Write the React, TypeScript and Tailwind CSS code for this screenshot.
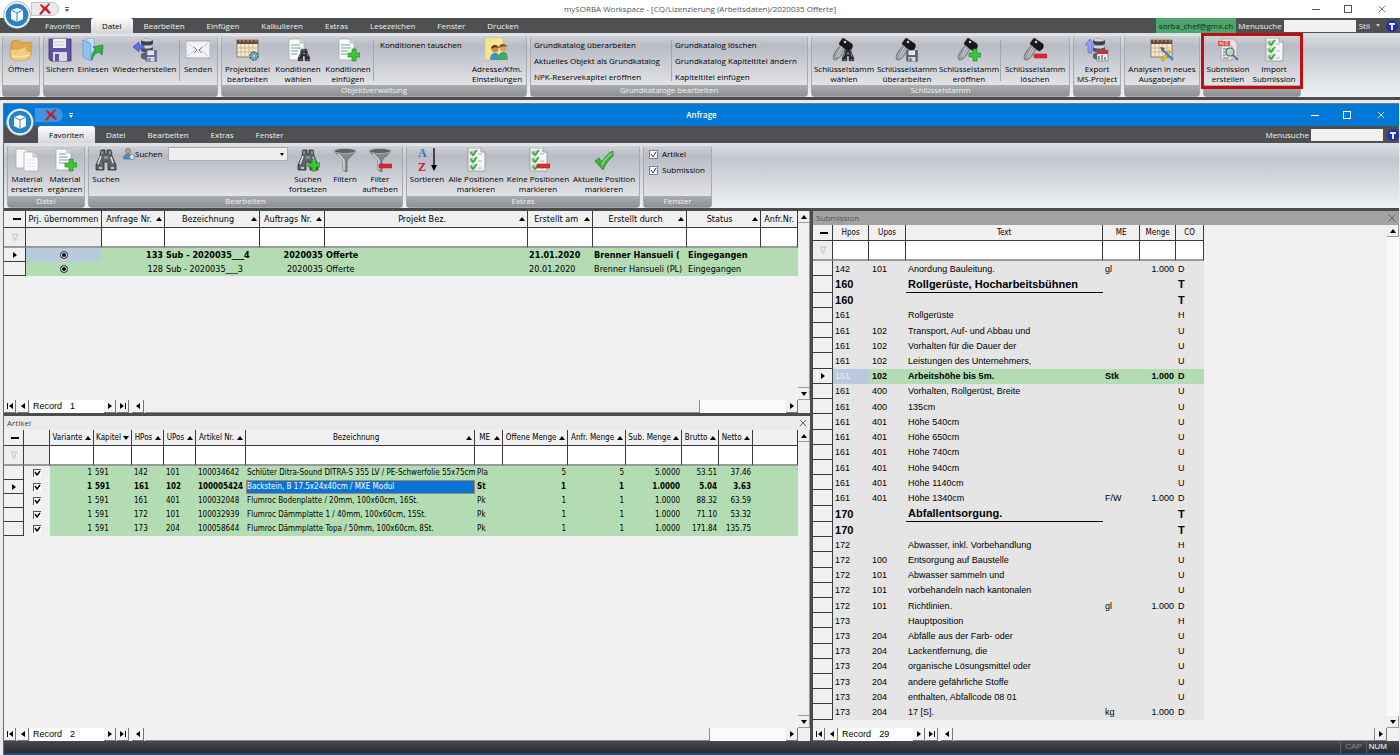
import React from 'react';

type IconProps = { className?: string };

const Svg: React.FC<{ children: React.ReactNode; className?: string }> = ({ children, className }) => (
    <svg viewBox="0 0 24 24" className={className || 'w-6 h-6'} fill="none" aria-hidden="true">
        {children}
    </svg>
);

/* ---------- shared icon parts ---------- */

const PlusPart = () => (
    <path d="M16 11h4v4h4v4h-4v4h-4v-4h-4v-4h4z" fill="#3fc43a" stroke="#1c8a22" strokeWidth="0.7" />
);

const MinusPart = () => <rect x="11" y="16" width="13" height="4" rx="0.5" fill="#e02a30" stroke="#a8141a" strokeWidth="0.5" />;

const DocPart = () => (
    <>
        <path d="M3 1h11l4 4v17H3z" fill="#fafbfb" stroke="#a4a9ae" strokeWidth="0.8" />
        <path d="M14 1v4h4" fill="#dfe3e6" stroke="#a4a9ae" strokeWidth="0.8" />
    </>
);

const BinoPart: React.FC<{ x?: number; y?: number; s?: number; light?: boolean }> = ({ x = 0, y = 0, s = 1, light }) => (
    <g transform={`translate(${x} ${y}) scale(${s})`}>
        <path d="M7 2h4v4h2V2h4l1 6 4 9v5h-8v-8h-4v8H2v-5l4-9z" fill={light ? '#606468' : '#26282b'} stroke="#1b1c1e" strokeWidth="0.7" />
        <path d="M4 16l3-8M19 15l-2-6M5 20h3M17 20h3" stroke={light ? '#dfe2e4' : '#8b9095'} strokeWidth="1.6" />
        <path d="M8 3v3M16 3v3" stroke="#b9bdc1" strokeWidth="1" />
        <rect x="10" y="8" width="4" height="3" fill="#8b8f93" />
    </g>
);

const KeyPart = () => (
    <>
        <path d="M2 22c-2-2 0-8 4-12l5-5 4 3-4 6c-2 4-4 8-9 8z" fill="#989ca0" stroke="#6e7276" strokeWidth="0.8" />
        <path d="M4 19l6-11M6 19l5-8" stroke="#d5d8da" strokeWidth="0.9" />
        <path d="M8 4l3-4 9 6c1 2 0 5-2 6l-2 1-9-7z" fill="#17181a" stroke="#000" strokeWidth="0.5" />
        <circle cx="13" cy="4" r="1.3" fill="#c8cbce" />
    </>
);

const CheckListPart = () => (
    <>
        <path d="M4 0h13l4 4v19H4z" fill="#f4f6f5" stroke="#8e9499" strokeWidth="0.8" />
        <path d="M17 0v4h4" fill="#cfd4d6" stroke="#8e9499" strokeWidth="0.8" />
        <path d="M6 3h5v4H6zM6 10h5v4H6zM6 17h5v4H6z" fill="#e2ebe0" stroke="#8c9b8c" strokeWidth="0.6" />
        <path d="M7 4l2 3 4-5M7 11l2 3 4-5M7 18l2 3 4-5" stroke="#36a936" strokeWidth="1.7" />
        <path d="M14 6h4M14 13h4M14 20h4" stroke="#9ba3a5" strokeWidth="0.8" />
    </>
);

const CalendarPart = () => (
    <>
        <rect x="1" y="2" width="21" height="17" fill="#f5ead3" stroke="#7b6550" strokeWidth="0.8" />
        <rect x="1" y="2" width="21" height="4" fill="#6a4a35" />
        <path d="M4 0v4M8 0v4M12 0v4M16 0v4M20 0v4" stroke="#c9b49a" strokeWidth="0.9" />
        <path d="M1 10h21M1 14h21M5 6v13M9 6v13M13 6v13M17 6v13" stroke="#c9a97c" strokeWidth="0.8" />
    </>
);

const DiskPart: React.FC<{ x: number; y: number; s: number; color: string }> = ({ x, y, s, color }) => (
    <g transform={`translate(${x} ${y}) scale(${s})`}>
        <path d="M1 1h22v22H3l-2-2z" fill={color} stroke="#3d3467" strokeWidth="0.8" />
        <rect x="5" y="1" width="13" height="9" fill="#f1f1f6" />
        <path d="M6 4h11M6 7h11" stroke="#bcbccc" strokeWidth="0.8" />
        <rect x="5" y="14" width="14" height="9" fill="#d9d9e6" />
        <rect x="7" y="16" width="4" height="7" fill={color} />
    </g>
);

const ServerPart = () => (
    <>
        <path d="M8 2c3-2 9-2 12 0v4c-3 2-9 2-12 0z" fill="#3e4348" />
        <path d="M8 9c3-2 9-2 12 0v4c-3 2-9 2-12 0z" fill="#4c5257" />
        <path d="M8 16c3-2 9-2 12 0v4c-3 2-9 2-12 0z" fill="#5b6166" />
        <path d="M8 2c3-2 9-2 12 0-3 2-9 2-12 0zM8 9c3-2 9-2 12 0-3 2-9 2-12 0z" fill="#cfd5da" />
    </>
);

/* ---------- icons ---------- */

const FolderIcon = () => (
    <Svg>
        <path d="M2 8l1-5 7-1 2 3 10-1v12l-3 5H2z" fill="#e2ab4a" stroke="#b98329" strokeWidth="0.6" />
        <path d="M1 11c5 1 12 0 16-3l1 5 5 1-3 7c-6 2-13 2-18 0z" fill="#f3cb7c" stroke="#c89239" strokeWidth="0.6" />
        <path d="M3 18c6 1 11 1 17-1" stroke="#fbe5b2" strokeWidth="1.4" />
    </Svg>
);

const SaveIcon = () => (
    <Svg>
        <DiskPart x={0} y={0} s={1} color="#6552a3" />
    </Svg>
);

const ImportIcon = () => (
    <Svg>
        <path d="M2 2l8 4v17l-8-4z" fill="#8ec3ee" stroke="#5590c8" strokeWidth="0.6" />
        <path d="M4 1l9-1v15l-3 8V6z" fill="#c5e2f8" stroke="#6aa3d6" strokeWidth="0.6" />
        <path d="M11 22c-1-6 1-9 4-10l-3-3 10-2-1 10-3-3c-4 1-6 4-7 8z" fill="#2fb344" stroke="#157a2a" strokeWidth="0.7" />
    </Svg>
);

const RestoreIcon = () => (
    <Svg>
        <ServerPart />
        <path d="M0 9l6-5v3h5v4H6v3z" fill="#5f6fe8" stroke="#2f3dae" strokeWidth="0.6" />
        <DiskPart x={12} y={12} s={0.5} color="#6b6f92" />
    </Svg>
);

const MailIcon = () => (
    <Svg>
        <rect x="0" y="3" width="24" height="17" fill="#f3f4f5" stroke="#a2a7ac" strokeWidth="1" />
        <path d="M2 5l10 8 10-8M2 18l8-7M22 18l-8-7" stroke="#c9cdd0" strokeWidth="1" />
        <path d="M8 9l3 3-3 3M16 9l-3 3 3 3" stroke="#7f858a" strokeWidth="1" />
    </Svg>
);

const ProjectIcon = () => (
    <Svg>
        <CalendarPart />
        <circle cx="18" cy="18" r="4" fill="#7fb3c4" stroke="#2f6377" strokeWidth="1.4" strokeDasharray="2 1" />
        <circle cx="18" cy="18" r="1.6" fill="#e9f1f4" stroke="#2f6377" strokeWidth="0.6" />
    </Svg>
);

const DocLines = () => <path d="M5 7h9M5 10h10M5 13h7M5 16h6" stroke="#69ae85" strokeWidth="1.2" />;

const DocSearchIcon = () => (
    <Svg>
        <DocPart />
        <DocLines />
        <BinoPart x={11} y={10} s={0.58} />
    </Svg>
);

const DocPlusIcon = () => (
    <Svg>
        <DocPart />
        <DocLines />
        <PlusPart />
    </Svg>
);

const ContactsIcon = () => (
    <Svg>
        <rect x="0" y="0" width="18" height="22" fill="#f6e58d" stroke="#d8c25a" strokeWidth="0.5" />
        <circle cx="10" cy="11" r="3.4" fill="#c98a55" />
        <path d="M6 11c0-5 7-5 8-1-2-1-5-1-8 1z" fill="#55341c" />
        <circle cx="18" cy="10" r="3.4" fill="#dba06a" />
        <path d="M14 10c0-5 7-5 8-1-2-1-5-1-8 1z" fill="#7a4a22" />
        <path d="M5 22c0-5 2-7 5-7s5 2 5 7z" fill="#3f8fc9" />
        <path d="M13 22c0-6 2-8 5-8s5 2 5 8z" fill="#3daa6e" />
    </Svg>
);

const KeySearchIcon = () => (
    <Svg>
        <KeyPart />
        <BinoPart x={9} y={10} s={0.58} />
    </Svg>
);

const KeyEditIcon = () => (
    <Svg>
        <KeyPart />
        <DiskPart x={11} y={12} s={0.5} color="#5d6370" />
    </Svg>
);

const KeyPlusIcon = () => (
    <Svg>
        <KeyPart />
        <PlusPart />
    </Svg>
);

const KeyMinusIcon = () => (
    <Svg>
        <KeyPart />
        <MinusPart />
    </Svg>
);

const ExportIcon = () => (
    <Svg>
        <ServerPart />
        <path d="M5 1l5 6H7v8H3V7H0z" fill="#8f9bf0" stroke="#5562c9" strokeWidth="0.6" />
        <rect x="12" y="12" width="11" height="11" fill="#eceef0" stroke="#70757a" strokeWidth="0.7" />
        <rect x="12" y="12" width="11" height="4" fill="#c9343b" />
        <path d="M14 18v4M17 17v5M20 19v3" stroke="#555b60" strokeWidth="1.2" />
    </Svg>
);

const AnalysisIcon = () => (
    <Svg>
        <CalendarPart />
        <path d="M11 22l8-10 2 2-8 9z" fill="#f0c63c" stroke="#9d7b12" strokeWidth="0.6" />
        <path d="M13 12l10 10" stroke="#4f7fc9" strokeWidth="2.4" />
        <path d="M10 9l5 1-3 4z" fill="#5e6469" />
    </Svg>
);

const SubmissionIcon = () => (
    <Svg>
        <path d="M6 1h11l4 4v16H6z" fill="#f3dfdd" stroke="#b8a3a2" strokeWidth="0.8" />
        <path d="M2 3h12v5H2z" fill="#d9534c" />
        <path d="M3 6l2-2v3M7 4v3M9 4h3M9 6h3" stroke="#fbe3e0" strokeWidth="0.8" />
        <path d="M5 8h11v14H5z" fill="#e9ebea" stroke="#8f9599" strokeWidth="0.7" />
        <path d="M7 11h6M7 14h3M7 17h3M7 20h6" stroke="#70777c" strokeWidth="1" />
        <circle cx="14" cy="14" r="4" fill="#b5d8c8" stroke="#54615c" strokeWidth="1.2" />
        <path d="M17 17l5 5" stroke="#4b78b8" strokeWidth="2.2" />
    </Svg>
);

const CheckListIcon = () => (
    <Svg>
        <CheckListPart />
    </Svg>
);

const CheckListMinusIcon = () => (
    <Svg>
        <CheckListPart />
        <MinusPart />
    </Svg>
);

const CopyIcon = () => (
    <Svg>
        <path d="M1 1h9l4 4v15H1z" fill="#f7f8f8" stroke="#a9adb1" strokeWidth="0.8" />
        <path d="M9 4h9l5 5v14H9z" fill="#fcfcfc" stroke="#a9adb1" strokeWidth="0.8" />
        <path d="M18 4v5h5" fill="#e1e4e6" stroke="#a9adb1" strokeWidth="0.8" />
        <path d="M11 12h9M11 15h9M11 18h9" stroke="#dcdfe1" strokeWidth="0.9" />
    </Svg>
);

const AddDocIcon = () => (
    <Svg>
        <DocPart />
        <path d="M6 6h7M6 9h9M6 12h9M6 15h6" stroke="#8b95a5" strokeWidth="1" />
        <PlusPart />
    </Svg>
);

const SearchIcon = () => (
    <Svg>
        <BinoPart light />
    </Svg>
);

const SearchNextIcon = () => (
    <Svg>
        <BinoPart light />
        <PlusPart />
    </Svg>
);

const FunnelPart = () => (
    <>
        <path d="M1 3c3 4 8 7 9 10v9l4 2V13c1-3 6-6 9-10z" fill="#85898d" stroke="#585c60" strokeWidth="0.7" />
        <path d="M5 6c3 3 6 5 6 8v8" stroke="#d8dbdd" strokeWidth="1.6" />
        <ellipse cx="12" cy="3" rx="11" ry="2.5" fill="#5d6165" stroke="#b7babd" strokeWidth="0.8" />
    </>
);

const FilterIcon = () => (
    <Svg>
        <FunnelPart />
    </Svg>
);

const FilterOffIcon = () => (
    <Svg>
        <FunnelPart />
        <MinusPart />
    </Svg>
);

const SortIcon = () => (
    <Svg className="w-6 h-6 overflow-visible">
        <text x="3" y="9" fontFamily="Liberation Serif, serif" fontWeight="700" fontSize="12" fill="#3f6fc4">A</text>
        <text x="3" y="23" fontFamily="Liberation Serif, serif" fontWeight="700" fontSize="12" fill="#c8202c">Z</text>
        <path d="M19 0v20" stroke="#000" strokeWidth="1.3" />
        <path d="M16 17h6l-3 6z" fill="#000" />
    </Svg>
);

const BigCheckIcon = () => (
    <Svg>
        <path d="M3 13l4-3 3 4c3-5 6-9 11-11v5c-5 4-8 9-10 14z" fill="#3fb43c" stroke="#1b7a22" strokeWidth="0.7" />
        <path d="M10 17c2-5 6-9 10-12" stroke="#93e08a" strokeWidth="1.2" />
    </Svg>
);

const UserIcon = () => (
    <Svg className="w-3 h-3">
        <circle cx="10" cy="6" r="5" fill="#c9a27a" stroke="#6e5235" />
        <path d="M1 22c0-7 4-10 9-10s8 3 9 10z" fill="#4f87c7" stroke="#2f5f98" />
        <circle cx="18" cy="18" r="5" fill="#dbe6ee" stroke="#6c7b86" strokeWidth="1.5" />
    </Svg>
);

const LogoIcon: React.FC<IconProps> = ({ className }) => (
    <svg viewBox="0 0 28 28" className={className} aria-hidden="true">
        <circle cx="14" cy="14" r="13.5" fill="#f2f4f6" stroke="#8a9097" strokeWidth="0.6" />
        <circle cx="14" cy="14" r="11.3" fill="#2683c6" />
        <path d="M14 7l6 2v9l-6 3-6-3V9z" fill="#fff" />
        <path d="M8 9l6 3 6-3M14 12v9" stroke="#2683c6" strokeWidth="1" fill="none" />
    </svg>
);

const InfoIcon = () => (
    <svg viewBox="0 0 12 12" className="w-3 h-3" aria-hidden="true">
        <circle cx="6" cy="6" r="5.8" fill="#1c2fb5" />
        <path d="M3 3h6v2H7v5H5V5H3z" fill="#e8ecff" />
    </svg>
);

const CrossIcon: React.FC<IconProps> = ({ className }) => (
    <svg viewBox="0 0 10 10" className={className} fill="none" stroke="currentColor" aria-hidden="true">
        <path d="M1 1l8 8M9 1l-8 8" />
    </svg>
);

const RedCrossIcon = () => (
    <svg viewBox="0 0 12 12" className="w-3 h-3" aria-hidden="true">
        <path d="M2 1l4 3 4-4 1 1-3 4 4 5-2 1-4-4-4 5-2-1 4-5-3-4z" fill="#c81e2a" />
    </svg>
);

const Arrow: React.FC<{ dir: 'up' | 'down' | 'left' | 'right' | 'first' | 'last' }> = ({ dir }) => (
    <svg viewBox="0 0 8 8" className="w-2 h-2 shrink-0" fill="#000" aria-hidden="true">
        {dir === 'up' && <path d="M1 6l3-4 3 4z" />}
        {dir === 'down' && <path d="M1 2h6L4 6z" />}
        {dir === 'left' && <path d="M6 1v6L2 4z" />}
        {dir === 'right' && <path d="M2 1v6l4-3z" />}
        {dir === 'first' && <path d="M1 1h1v6H1zM7 1v6L3 4z" />}
        {dir === 'last' && <path d="M6 1h1v6H6zM1 1v6l4-3z" />}
    </svg>
);

/* ---------- window chrome ---------- */

const WindowButtons = () => (
    <div className="flex items-center justify-end">
        <button type="button" aria-label="Minimieren" className="w-8 h-4 flex items-center justify-center">
            <span className="w-2 h-px bg-current" />
        </button>
        <button type="button" aria-label="Wiederherstellen" className="w-8 h-4 flex items-center justify-center">
            <span className="w-2 h-2 border border-current" />
        </button>
        <button type="button" aria-label="Schliessen" className="w-9 h-4 flex items-center justify-center">
            <CrossIcon className="w-2 h-2" />
        </button>
    </div>
);

const Tabs: React.FC<{ items: string[]; active: string }> = ({ items, active }) => (
    <nav className="flex h-full items-end">
        {items.map((item) => (
            <button
                key={item}
                type="button"
                className={
                    item === active
                        ? 'h-full px-[11px] rounded-t-[3px] bg-linear-to-b from-white to-[#d3d5d9] text-black'
                        : 'h-full px-[11px] text-[#f2f2f2]'
                }
            >
                {item}
            </button>
        ))}
    </nav>
);

const QuickAccess: React.FC<{ blue?: boolean }> = ({ blue }) => (
    <div className="flex items-center pl-[31px]">
        <button
            type="button"
            aria-label="Abbrechen"
            className={
                blue
                    ? 'w-7 h-3.5 pl-1 flex items-center justify-center rounded-r-full bg-[#3f93e0]'
                    : 'w-7 h-3.5 flex items-center justify-center rounded-r-full border border-[#c3c6ca] bg-[#e9eaec]'
            }
        >
            <RedCrossIcon />
        </button>
        <span className="ml-1.5 flex flex-col items-center gap-px">
            <span className="w-1 h-px bg-current" />
            <svg viewBox="0 0 4 3" className="w-1 h-[3px]" fill="currentColor" aria-hidden="true"><path d="M0 0h4L2 3z" /></svg>
        </span>
    </div>
);

/* ---------- ribbon ---------- */

const Ribbon: React.FC<{ children: React.ReactNode; className: string }> = ({ children, className }) => (
    <div className={`flex gap-[3px] pt-0.5 border-b-[3px] border-[#4b4c4e] bg-linear-to-b from-[#dfe1e5] via-[#c3c6ce] via-25% to-[#eff2f3] ${className}`}>
        {children}
    </div>
);

const Group: React.FC<{ label?: string; className: string; children: React.ReactNode }> = ({ label, className, children }) => (
    <section className={`relative flex flex-col shrink-0 rounded-sm border border-[#a6a9ae] border-t-[#e6e7ea] ${className}`}>
        <div className="flex-1 flex min-h-0 bg-linear-to-b from-[#cfd1d7] via-[#b8bbc5] via-20% to-[#e1e3e5]">{children}</div>
        <div className="h-[11px] leading-[10px] text-center text-[#f0f0f0] bg-linear-to-b from-[#aaacaf] to-[#8e9194]">{label}</div>
    </section>
);

const Tool: React.FC<{ icon: React.ReactNode; label: string; className: string }> = ({ icon, label, className }) => (
    <button type="button" className={`flex flex-col items-center shrink-0 pt-0.5 ${className}`}>
        {icon}
        <span className="mt-0.5 leading-[10px] whitespace-pre text-center">{label}</span>
    </button>
);

const Separator = () => <span className="w-px my-1 bg-[#a3a6ad] shrink-0" />;

const LinkColumn: React.FC<{ items: string[]; className?: string }> = ({ items, className }) => (
    <div className={`flex flex-col items-start pl-[3px] pt-px ${className}`}>
        {items.map((item) => (
            <button key={item} type="button" className="h-4 whitespace-nowrap">{item}</button>
        ))}
    </div>
);

const RibbonCheck: React.FC<{ label: string }> = ({ label }) => (
    <label className="h-4 flex items-center gap-1">
        <span className="relative w-[9px] h-[9px]">
            <input type="checkbox" defaultChecked className="block appearance-none w-[9px] h-[9px] border border-[#7d8288] bg-white" />
            <svg viewBox="0 0 9 9" className="absolute inset-0 pointer-events-none" fill="none" aria-hidden="true">
                <path d="M2 4l2 3 3-5" stroke="#333a5e" />
            </svg>
        </span>
        {label}
    </label>
);

/* ---------- grids ---------- */

type Column = { label: string; width?: number; sort?: 'up' | 'down'; filter?: boolean };

const GridHead: React.FC<{ columns: Column[]; name: string; className: string }> = ({ columns, name, className }) => (
    <>
        <colgroup>
            {columns.map((c, i) => (
                <col key={i} style={c.width ? { width: c.width } : undefined} />
            ))}
        </colgroup>
        <thead>
            <tr className={className}>
                {columns.map((c, i) => (
                    <th key={i} className="p-0 font-normal border-r border-b border-[#3a3a3a] bg-[#f0f0f0]">
                        {i === 0 ? (
                            <span className="block ml-auto mr-1 w-2 h-0.5 bg-black" />
                        ) : (
                            <span className="flex items-center px-px whitespace-nowrap">
                                <span className="flex-1 text-center">{c.label}</span>
                                {c.sort && <Arrow dir={c.sort} />}
                            </span>
                        )}
                    </th>
                ))}
            </tr>
            <tr className="h-5">
                {columns.map((c, i) => (
                    <td
                        key={i}
                        className={
                            c.filter === false || i === 0
                                ? 'p-0 border-r border-b-2 border-r-[#3a3a3a] border-b-[#9a9a9a] bg-[#eeeeee]'
                                : 'p-0 border-r border-b-2 border-r-[#3a3a3a] border-b-[#9a9a9a] bg-white'
                        }
                    >
                        {i === 0 && (
                            <svg viewBox="0 0 8 8" className="w-2 h-2 mx-auto" fill="none" stroke="#c2c2c2" aria-hidden="true">
                                <path d="M1 1h6L5 4v3H3V4z" />
                            </svg>
                        )}
                        {i > 0 && c.filter !== false && (
                            <input aria-label={`${name} Filter ${c.label}`} className="block w-full h-4 px-px bg-transparent outline-none" />
                        )}
                    </td>
                ))}
            </tr>
        </thead>
    </>
);

const RowHead: React.FC<{ current?: boolean }> = ({ current }) => (
    <td className="p-0 border-r border-b border-[#3a3a3a] bg-[#f0f0f0]">
        {current && <span className="flex justify-center"><Arrow dir="right" /></span>}
    </td>
);

const navButton = 'w-3 flex items-center justify-center border-r border-b border-[#777] bg-[#f4f4f4] mr-px';

const RecordBar: React.FC<{ record: number; track?: string }> = ({ record, track }) => (
    <div className="h-[13px] flex shrink-0 font-['Liberation_Sans',sans-serif] text-[9px] bg-[#f0f0f0]">
        <button type="button" aria-label="Erster" className={navButton}><Arrow dir="first" /></button>
        <button type="button" aria-label="Vorheriger" className={navButton}><Arrow dir="left" /></button>
        <span className="w-[74px] pl-[3px] leading-[13px] bg-white">
            Record<span className="ml-2">{record}</span>
        </span>
        <button type="button" aria-label="Nächster" className={navButton}><Arrow dir="right" /></button>
        <button type="button" aria-label="Letzter" className={navButton}><Arrow dir="last" /></button>
        <button type="button" aria-label="Nach links" className={`${navButton} ml-0.5`}><Arrow dir="left" /></button>
        <span className="flex-1 border-r border-b border-[#8a8a8a]" />
        <span className={`bg-[#fafafa] ${track || 'w-0'}`} />
        <button type="button" aria-label="Nach rechts" className="w-3 flex items-center justify-center border-r border-b border-[#777]"><Arrow dir="right" /></button>
        <span className="w-3" />
    </div>
);

const ScrollBar: React.FC<{ thumb?: boolean }> = ({ thumb }) => (
    <div className="w-3 shrink-0 flex flex-col bg-[#fafafa]">
        <button type="button" aria-label="Nach oben" className="h-3 flex items-center justify-center border-r border-b border-[#999] bg-[#f0f0f0]"><Arrow dir="up" /></button>
        <span className={thumb ? 'flex-1 bg-[#f0f0f0] border-r border-b border-[#999]' : 'flex-1'} />
        <button type="button" aria-label="Nach unten" className="h-3 flex items-center justify-center border-r border-b border-[#999] bg-[#f0f0f0]"><Arrow dir="down" /></button>
    </div>
);

/* ---------- data ---------- */

const requestColumns: Column[] = [
    { label: '', width: 22 },
    { label: 'Prj. übernommen', width: 76, filter: false },
    { label: 'Anfrage Nr.', width: 63, sort: 'up' },
    { label: 'Bezeichnung', width: 95, sort: 'up' },
    { label: 'Auftrags Nr.', width: 65, sort: 'up' },
    { label: 'Projekt Bez.', sort: 'up' },
    { label: 'Erstellt am', width: 65, sort: 'up' },
    { label: 'Erstellt durch', width: 94, sort: 'up' },
    { label: 'Status', width: 74, sort: 'up' },
    { label: 'Anfr.Nr.', width: 37 },
];

const requests = [
    { nr: 133, name: 'Sub - 2020035___4', order: '2020035', project: 'Offerte', date: '21.01.2020', by: 'Brenner Hansueli (', status: 'Eingegangen' },
    { nr: 128, name: 'Sub - 2020035___3', order: '2020035', project: 'Offerte', date: '20.01.2020', by: 'Brenner Hansueli (PL)', status: 'Eingegangen' },
];

const articleColumns: Column[] = [
    { label: '', width: 20 },
    { label: '', width: 26, filter: false },
    { label: 'Variante', width: 44, sort: 'up' },
    { label: 'Kapitel', width: 38, sort: 'down' },
    { label: 'HPos', width: 32, sort: 'up' },
    { label: 'UPos', width: 32, sort: 'up' },
    { label: 'Artikel Nr.', width: 50, sort: 'up' },
    { label: 'Bezeichnung', sort: 'up' },
    { label: 'ME', width: 28, sort: 'up' },
    { label: 'Offene Menge', width: 65, sort: 'up' },
    { label: 'Anfr. Menge', width: 58, sort: 'up' },
    { label: 'Sub. Menge', width: 56, sort: 'up' },
    { label: 'Brutto', width: 37, sort: 'up' },
    { label: 'Netto', width: 34, sort: 'up' },
    { label: '', width: 45 },
];

// hpos, upos, article nr, description, unit, open, requested, sub, gross, net
const articles = [
    ['142', '101', '100034642', 'Schlüter Ditra-Sound DITRA-S 355 LV / PE-Schwerfolie 55x75cm', 'Pla', '5', '5', '5.0000', '53.51', '37.46'],
    ['161', '102', '100005424', 'Backstein, B 17.5x24x40cm / MXE Modul', 'St', '1', '1', '1.0000', '5.04', '3.63'],
    ['161', '401', '100032048', 'Flumroc Bodenplatte / 20mm, 100x60cm, 16St.', 'Pk', '1', '1', '1.0000', '88.32', '63.59'],
    ['172', '101', '100032939', 'Flumroc Dämmplatte 1 / 40mm, 100x60cm, 15St.', 'Pk', '1', '1', '1.0000', '71.10', '53.32'],
    ['173', '204', '100058644', 'Flumroc Dämmplatte Topa / 50mm, 100x60cm, 8St.', 'Pk', '1', '1', '1.0000', '171.84', '135.75'],
];

const submissionColumns: Column[] = [
    { label: '', width: 20 },
    { label: 'Hpos', width: 36 },
    { label: 'Upos', width: 37 },
    { label: 'Text', width: 197 },
    { label: 'ME', width: 37 },
    { label: 'Menge', width: 36 },
    { label: 'CO', width: 28 },
];

// hpos, upos, text, unit, amount, code
const submission = [
    ['142', '101', 'Anordung Bauleitung.', 'gl', '1.000', 'D'],
    ['160', '', 'Rollgerüste, Hocharbeitsbühnen', '', '', 'T'],
    ['160', '', '', '', '', 'T'],
    ['161', '', 'Rollgerüste', '', '', 'H'],
    ['161', '102', 'Transport, Auf- und Abbau und', '', '', 'U'],
    ['161', '102', 'Vorhalten für die Dauer der', '', '', 'U'],
    ['161', '102', 'Leistungen des Unternehmers,', '', '', 'U'],
    ['161', '102', 'Arbeitshöhe bis 5m.', 'Stk', '1.000', 'D'],
    ['161', '400', 'Vorhalten, Rollgerüst, Breite', '', '', 'U'],
    ['161', '400', '135cm', '', '', 'U'],
    ['161', '401', 'Höhe 540cm', '', '', 'U'],
    ['161', '401', 'Höhe 650cm', '', '', 'U'],
    ['161', '401', 'Höhe 740cm', '', '', 'U'],
    ['161', '401', 'Höhe 940cm', '', '', 'U'],
    ['161', '401', 'Höhe 1140cm', '', '', 'U'],
    ['161', '401', 'Höhe 1340cm', 'F/W', '1.000', 'D'],
    ['170', '', 'Abfallentsorgung.', '', '', 'T'],
    ['170', '', '', '', '', 'T'],
    ['172', '', 'Abwasser, inkl. Vorbehandlung', '', '', 'H'],
    ['172', '100', 'Entsorgung auf Baustelle', '', '', 'U'],
    ['172', '101', 'Abwasser sammeln und', '', '', 'U'],
    ['172', '101', 'vorbehandeln nach kantonalen', '', '', 'U'],
    ['172', '101', 'Richtlinien.', 'gl', '1.000', 'D'],
    ['173', '', 'Hauptposition', '', '', 'H'],
    ['173', '204', 'Abfälle aus der Farb- oder', '', '', 'U'],
    ['173', '204', 'Lackentfernung, die', '', '', 'U'],
    ['173', '204', 'organische Lösungsmittel oder', '', '', 'U'],
    ['173', '204', 'andere gefährliche Stoffe', '', '', 'U'],
    ['173', '204', 'enthalten, Abfallcode 08 01', '', '', 'U'],
    ['173', '204', '17 [S].', 'kg', '1.000', 'D'],
];

/* ---------- panes ---------- */

const RequestGrid = () => (
    <section className="h-[205px] shrink-0 flex flex-col border-b-[3px] border-[#4b4c4e]">
        <div className="flex-1 flex min-h-0">
            <div className="flex-1 min-w-0">
                <table className="w-full table-fixed border-separate border-spacing-0 font-['DejaVu_Sans_Condensed','DejaVu_Sans',sans-serif] text-[9px] leading-[13px]">
                    <GridHead columns={requestColumns} name="Anfrage" className="h-[17px]" />
                    <tbody>
                        {requests.map((r, i) => (
                            <tr key={r.nr} className={i === 0 ? 'h-3.5 bg-[#b3dcb3] font-bold whitespace-nowrap' : 'h-3.5 bg-[#b3dcb3] whitespace-nowrap'}>
                                <RowHead current={i === 0} />
                                <td className={i === 0 ? 'p-0 bg-[#b9c9de]' : 'p-0'}>
                                    <input
                                        type="radio"
                                        name={`taken-${r.nr}`}
                                        aria-label={`Projekt übernommen ${r.nr}`}
                                        defaultChecked
                                        className="block mx-auto appearance-none w-2 h-2 rounded-full border border-[#444] bg-black ring-1 ring-inset ring-white"
                                    />
                                </td>
                                <td className="p-0 pr-0.5 text-right">{r.nr}</td>
                                <td className="p-0 pl-px">{r.name}</td>
                                <td className="p-0 pr-0.5 text-right">{r.order}</td>
                                <td className="p-0 pl-px">{r.project}</td>
                                <td className="p-0 pl-px">{r.date}</td>
                                <td className="p-0 pl-px">{r.by}</td>
                                <td className="p-0 pl-px">{r.status}</td>
                                <td className="p-0" />
                            </tr>
                        ))}
                    </tbody>
                </table>
            </div>
            <ScrollBar thumb />
        </div>
        <RecordBar record={1} track="w-[86px]" />
    </section>
);

const ArticleGrid = () => (
    <section className="flex-1 min-h-0 flex flex-col">
        <header className="h-3.5 shrink-0 flex items-center justify-between px-[3px] bg-[#ebebed] text-[8px] text-[#444]">
            <h2>Artikel</h2>
            <button type="button" aria-label="Artikel schliessen"><CrossIcon className="w-2 h-2" /></button>
        </header>
        <div className="flex-1 flex min-h-0">
            <div className="flex-1 min-w-0">
                <table className="w-full table-fixed border-separate border-spacing-0 font-['DejaVu_Sans_Condensed','DejaVu_Sans',sans-serif] text-[8px] leading-[12px]">
                    <GridHead columns={articleColumns} name="Artikel" className="h-4" />
                    <tbody>
                        {articles.map((a, i) => (
                            <tr key={a[2]} className={i === 1 ? 'h-3.5 bg-[#b3dcb3] font-bold whitespace-nowrap' : 'h-3.5 bg-[#b3dcb3] whitespace-nowrap'}>
                                <RowHead current={i === 1} />
                                <td className="p-0 bg-[#f0f0f0]">
                                    <span className="relative block w-2 h-2 mx-auto">
                                        <input
                                            type="checkbox"
                                            aria-label={`Artikel ${a[2]}`}
                                            defaultChecked
                                            className="block appearance-none w-2 h-2 border-t border-l border-[#555] bg-white"
                                        />
                                        <svg viewBox="0 0 8 8" className="absolute inset-0 pointer-events-none" fill="none" aria-hidden="true">
                                            <path d="M2 3l2 3 3-4" stroke="#000" strokeWidth="1.4" />
                                        </svg>
                                    </span>
                                </td>
                                <td className="p-0 pr-0.5 text-right">1</td>
                                <td className="p-0 pl-px">591</td>
                                <td className="p-0 pl-0.5">{a[0]}</td>
                                <td className="p-0 pl-0.5">{a[1]}</td>
                                <td className="p-0 pl-0.5">{a[2]}</td>
                                <td
                                    className={
                                        i === 1
                                            ? 'p-0 font-normal text-white bg-[#0a74d6] border border-[#a08a6a]'
                                            : 'p-0 pl-px'
                                    }
                                >
                                    {a[3]}
                                </td>
                                <td className="p-0 pl-0.5">{a[4]}</td>
                                <td className="p-0 pr-0.5 text-right">{a[5]}</td>
                                <td className="p-0 pr-0.5 text-right">{a[6]}</td>
                                <td className="p-0 pr-0.5 text-right">{a[7]}</td>
                                <td className="p-0 pr-0.5 text-right">{a[8]}</td>
                                <td className="p-0 pr-0.5 text-right">{a[9]}</td>
                                <td className="p-0" />
                            </tr>
                        ))}
                    </tbody>
                </table>
            </div>
            <ScrollBar thumb />
        </div>
        <RecordBar record={2} track="w-[76px]" />
    </section>
);

const rowStyle = (code: string, current: boolean) => {
    if (current) return 'bg-[#b3dcb3] font-bold';
    if (code === 'T') return 'font-bold text-[11px]';
    return '';
};

const SubmissionGrid = () => (
    <aside className="w-[42%] flex flex-col min-h-0">
        <header className="h-3.5 shrink-0 flex items-center justify-between px-[3px] bg-[#a2a2a2] text-[8px] text-[#555]">
            <h2>Submission</h2>
            <button type="button" aria-label="Submission schliessen"><CrossIcon className="w-2 h-2" /></button>
        </header>
        <div className="flex-1 flex min-h-0">
            <div className="flex-1 min-w-0 pb-2">
                <table className="w-[391px] h-full table-fixed border-separate border-spacing-0 font-['Liberation_Sans',sans-serif] text-[9px] leading-[12px]">
                    <GridHead
                        columns={submissionColumns}
                        name="Submission"
                        className="h-4 font-['DejaVu_Sans_Condensed','DejaVu_Sans',sans-serif] text-[8px]"
                    />
                    <tbody className="bg-[#e5e5e5]">
                        {submission.map((s, i) => {
                            const current = i === 7;
                            return (
                                <tr key={i} className={`whitespace-nowrap ${rowStyle(s[5], current)}`}>
                                    <RowHead current={current} />
                                    <td className={current ? 'p-0 pl-0.5 font-normal text-[#e6eefa] bg-[#b9c9de]' : 'p-0 pl-0.5'}>{s[0]}</td>
                                    <td className="p-0 pl-[3px]">{s[1]}</td>
                                    <td className={s[5] === 'T' && s[2] ? 'p-0 pl-0.5 border-b border-black' : 'p-0 pl-0.5'}>{s[2]}</td>
                                    <td className="p-0 pl-0.5">{s[3]}</td>
                                    <td className="p-0 pr-0.5 text-right">{s[4]}</td>
                                    <td className="p-0 pl-0.5">{s[5]}</td>
                                </tr>
                            );
                        })}
                    </tbody>
                </table>
            </div>
            <ScrollBar />
        </div>
        <RecordBar record={29} />
    </aside>
);

const App: React.FC = () => {
    return (
        <div className="h-screen min-w-[1310px] flex flex-col overflow-hidden bg-[#e9ecee] font-['Open_Sans',sans-serif] text-[8px] text-black">
            {/* main window */}
            <header className="relative shrink-0">
                <div className="h-[18px] grid grid-cols-[1fr_auto_1fr] items-center bg-white text-[#555]">
                    <QuickAccess />
                    <h1>mySORBA Workspace - [CQ/Lizenzierung (Arbeitsdaten)/2020035 Offerte]</h1>
                    <WindowButtons />
                </div>
                <div className="h-[15px] flex items-center bg-[#4f5051] pl-[34px] pr-0.5 text-[#f2f2f2]">
                    <Tabs
                        items={['Favoriten', 'Datei', 'Bearbeiten', 'Einfügen', 'Kalkulieren', 'Extras', 'Lesezeichen', 'Fenster', 'Drucken']}
                        active="Datei"
                    />
                    <span className="ml-auto h-full px-[3px] leading-[15px] bg-[#4ea56c] text-[#0d2b16]">sorba_chef@gmx.ch</span>
                    <label htmlFor="menu-search" className="px-0.5">Menusuche</label>
                    <input id="menu-search" className="w-[72px] h-3 bg-[#f1f1f1] outline-none" />
                    <button type="button" className="ml-[3px] mr-1.5 flex items-center gap-1.5">
                        Stil
                        <svg viewBox="0 0 4 3" className="w-1 h-[3px]" fill="#ccc" aria-hidden="true"><path d="M0 0h4L2 3z" /></svg>
                    </button>
                    <InfoIcon />
                </div>
                <LogoIcon className="absolute left-[3px] top-px w-7 h-7" />
            </header>
            <Ribbon className="h-[67px] shrink-0 pl-0.5">
                <Group className="w-[38px]">
                    <Tool className="w-9" icon={<FolderIcon />} label="Öffnen" />
                </Group>
                <Group className="w-[175px]">
                    <Tool className="w-8" icon={<SaveIcon />} label="Sichern" />
                    <Tool className="w-[34px]" icon={<ImportIcon />} label="Einlesen" />
                    <Tool className="w-[69px]" icon={<RestoreIcon />} label="Wiederherstellen" />
                    <Separator />
                    <Tool className="w-9" icon={<MailIcon />} label="Senden" />
                </Group>
                <Group label="Objektverwaltung" className="w-[306px]">
                    <Tool className="w-[51px]" icon={<ProjectIcon />} label={'Projektdatei\nbearbeiten'} />
                    <Tool className="w-[50px]" icon={<DocSearchIcon />} label={'Konditionen\nwählen'} />
                    <Tool className="w-[50px]" icon={<DocPlusIcon />} label={'Konditionen\neinfügen'} />
                    <Separator />
                    <LinkColumn className="w-[92px] ml-[3px]" items={['Konditionen tauschen']} />
                    <Tool className="w-14" icon={<ContactsIcon />} label={'Adresse/Kfm.\nEinstellungen'} />
                </Group>
                <Group label="Grundkataloge bearbeiten" className="w-[278px]">
                    <LinkColumn
                        className="w-[140px]"
                        items={['Grundkatalog überarbeiten', 'Aktuelles Objekt als Grundkatalog', 'NPK-Reservekapitel eröffnen']}
                    />
                    <Separator />
                    <LinkColumn
                        className="flex-1"
                        items={['Grundkatalog löschen', 'Grundkatalog Kapiteltitel ändern', 'Kapiteltitel einfügen']}
                    />
                </Group>
                <Group label="Schlüsselstamm" className="w-[259px]">
                    <Tool className="w-16" icon={<KeySearchIcon />} label={'Schlüsselstamm\nwählen'} />
                    <Tool className="w-[62px]" icon={<KeyEditIcon />} label={'Schlüsselstamm\nüberarbeiten'} />
                    <Tool className="w-[62px]" icon={<KeyPlusIcon />} label={'Schlüsselstamm\neröffnen'} />
                    <Separator />
                    <Tool className="w-[68px]" icon={<KeyMinusIcon />} label={'Schlüsselstamm\nlöschen'} />
                </Group>
                <Group className="w-12">
                    <Tool className="w-[46px]" icon={<ExportIcon />} label={'Export\nMS-Project'} />
                </Group>
                <Group className="w-[76px]">
                    <Tool className="w-[74px]" icon={<AnalysisIcon />} label={'Analysen in neues\nAusgabejahr'} />
                </Group>
                <Group className="w-[98px]">
                    <Tool className="w-12" icon={<SubmissionIcon />} label={'Submission\nerstellen'} />
                    <Tool className="w-11" icon={<CheckListIcon />} label={'Import\nSubmission'} />
                    <span className="absolute -left-[3px] -top-[3px] w-[102px] h-14 border-[3px] border-[#c00d12] pointer-events-none" />
                </Group>
            </Ribbon>

            {/* request window */}
            <main className="flex-1 min-h-0 mt-[3px] ml-[3px] mr-px flex flex-col border-t border-l border-t-[#777] border-l-[#4a6fa5] bg-[#f0f0f0]">
                <header className="relative shrink-0">
                    <div className="h-[22px] grid grid-cols-[1fr_auto_1fr] items-center bg-[#0078d7] text-white">
                        <QuickAccess blue />
                        <h1 className="font-semibold">Anfrage</h1>
                        <WindowButtons />
                    </div>
                    <div className="h-[17px] flex items-center bg-[#4f5051] pl-[34px] text-[#f2f2f2]">
                        <Tabs items={['Favoriten', 'Datei', 'Bearbeiten', 'Extras', 'Fenster']} active="Favoriten" />
                        <label htmlFor="request-search" className="ml-auto px-0.5">Menusuche</label>
                        <input id="request-search" className="w-[72px] h-3 mr-1 bg-[#f1f1f1] outline-none" />
                        <InfoIcon />
                    </div>
                    <LogoIcon className="absolute left-0.5 top-1 w-7 h-7" />
                </header>
                <Ribbon className="h-[68px] shrink-0 pl-[3px]">
                    <Group label="Datei" className="w-[78px]">
                        <Tool className="w-[38px]" icon={<CopyIcon />} label={'Material\nersetzen'} />
                        <Tool className="w-[38px]" icon={<AddDocIcon />} label={'Material\nergänzen'} />
                    </Group>
                    <Group label="Bearbeiten" className="w-[315px]">
                        <Tool className="w-[34px]" icon={<SearchIcon />} label="Suchen" />
                        <div className="h-4 flex items-center">
                            <label htmlFor="search-term" className="flex items-center w-[45px]">
                                <UserIcon />
                                Suchen
                            </label>
                            <span className="relative">
                                <select id="search-term" className="block appearance-none w-[120px] h-3.5 border border-[#a9adb3] bg-[#eeeeee]">
                                    <option></option>
                                </select>
                                <svg viewBox="0 0 4 3" className="absolute right-1 top-1.5 w-1 h-[3px] pointer-events-none" aria-hidden="true">
                                    <path d="M0 0h4L2 3z" />
                                </svg>
                            </span>
                        </div>
                        <Tool className="w-10" icon={<SearchNextIcon />} label={'Suchen\nfortsetzen'} />
                        <Tool className="w-[34px]" icon={<FilterIcon />} label="Filtern" />
                        <Tool className="w-9" icon={<FilterOffIcon />} label={'Filter\naufheben'} />
                    </Group>
                    <Group label="Extras" className="w-[234px]">
                        <Tool className="w-10" icon={<SortIcon />} label="Sortieren" />
                        <Tool className="w-[58px]" icon={<CheckListIcon />} label={'Alle Positionen\nmarkieren'} />
                        <Tool className="w-[66px]" icon={<CheckListMinusIcon />} label={'Keine Positionen\nmarkieren'} />
                        <Tool className="w-[66px]" icon={<BigCheckIcon />} label={'Aktuelle Position\nmarkieren'} />
                    </Group>
                    <Group label="Fenster" className="w-[69px]">
                        <div className="pl-[5px]">
                            <RibbonCheck label="Artikel" />
                            <RibbonCheck label="Submission" />
                        </div>
                    </Group>
                </Ribbon>

                <div className="flex-1 flex min-h-0">
                    <div className="flex-1 min-w-0 flex flex-col border-r-[3px] border-[#4b4c4e]">
                        <RequestGrid />
                        <ArticleGrid />
                    </div>
                    <SubmissionGrid />
                </div>

                <footer className="h-3.5 shrink-0 flex items-center justify-end gap-1 pr-3 border-b-2 border-[#1f4e79] bg-linear-to-b from-[#46494f] to-[#2b2d30] font-['Liberation_Sans',sans-serif]">
                    <span className="pl-1 border-l border-[#5a5c60] text-[#8a8a8a]">CAP</span>
                    <span className="pl-0.5 border-l border-[#5a5c60] text-white">NUM</span>
                </footer>
            </main>
        </div>
    );
};

export default App;
